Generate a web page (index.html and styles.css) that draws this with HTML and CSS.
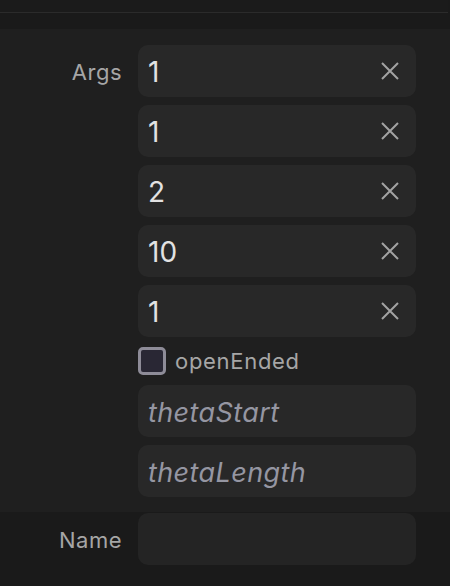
FILE: index.html
```html
<!DOCTYPE html>
<html>
<head>
<meta charset="utf-8">
<link rel="stylesheet" href="styles.css">
</head>
<body>
<div class="topbar"></div>
<div class="subbar"></div>
<section class="section args">
  <div class="label">Args</div>
  <div class="fields">
    <div class="field"><span class="value">1</span><svg class="clear" viewBox="0 0 20 20"><path d="M2 2L18 18M18 2L2 18"/></svg></div>
    <div class="field"><span class="value">1</span><svg class="clear" viewBox="0 0 20 20"><path d="M2 2L18 18M18 2L2 18"/></svg></div>
    <div class="field"><span class="value">2</span><svg class="clear" viewBox="0 0 20 20"><path d="M2 2L18 18M18 2L2 18"/></svg></div>
    <div class="field"><span class="value">10</span><svg class="clear" viewBox="0 0 20 20"><path d="M2 2L18 18M18 2L2 18"/></svg></div>
    <div class="field"><span class="value">1</span><svg class="clear" viewBox="0 0 20 20"><path d="M2 2L18 18M18 2L2 18"/></svg></div>
    <label class="check"><span class="box"></span><span class="check-label">openEnded</span></label>
    <div class="field"><span class="placeholder">thetaStart</span></div>
    <div class="field"><span class="placeholder">thetaLength</span></div>
  </div>
</section>
<section class="section name">
  <div class="label">Name</div>
  <div class="fields">
    <div class="field empty"></div>
  </div>
</section>
</body>
</html>
```
FILE: styles.css
```css
html, body {
  margin: 0;
  padding: 0;
  background: #1a1a1a;
  font-family: Inter, "Noto Sans", sans-serif;
  width: 450px;
  height: 586px;
  overflow: hidden;
}
.topbar {
  height: 12px;
  background: #1b1b1b;
  border-bottom: 1px solid #2b2b2b;
  margin-right: 2px;
}
.subbar {
  height: 16px;
  background: #1a1a1a;
}
.section {
  display: grid;
  grid-template-columns: 122px 278px;
  column-gap: 16px;
}
.args {
  background: #1f1f1f;
  padding: 16px 0 15px;
}
.name {
  background: #1a1a1a;
  padding: 1px 0 21px;
}
.label {
  color: #a6a6a6;
  font-size: 22px;
  letter-spacing: 0.5px;
  text-align: right;
  height: 52px;
  line-height: 54px;
}
.fields {
  display: flex;
  flex-direction: column;
  gap: 8px;
}
.field {
  height: 52px;
  border-radius: 10px;
  background: #282828;
  display: flex;
  align-items: center;
  padding: 0 16px 0 10px;
  box-sizing: border-box;
}
.name .field {
  background: #242424;
}
.value {
  flex: 1;
  color: #e2e2e2;
  font-size: 28px;
  line-height: 1;
  padding-top: 2px;
}
.placeholder {
  flex: 1;
  color: #9596a2;
  font-size: 27px;
  letter-spacing: 0.4px;
  font-style: italic;
  padding-top: 2px;
}
.clear {
  width: 20px;
  height: 20px;
  fill: none;
  stroke: #a3a3a3;
  stroke-width: 2;
}
.check {
  display: flex;
  align-items: center;
  height: 32px;
  gap: 9px;
}
.box {
  width: 22px;
  height: 22px;
  border: 3px solid #8e8c98;
  background: #292734;
  border-radius: 5px;
}
.check-label {
  color: #a6a6a6;
  font-size: 22px;
  letter-spacing: 0.7px;
}
```
